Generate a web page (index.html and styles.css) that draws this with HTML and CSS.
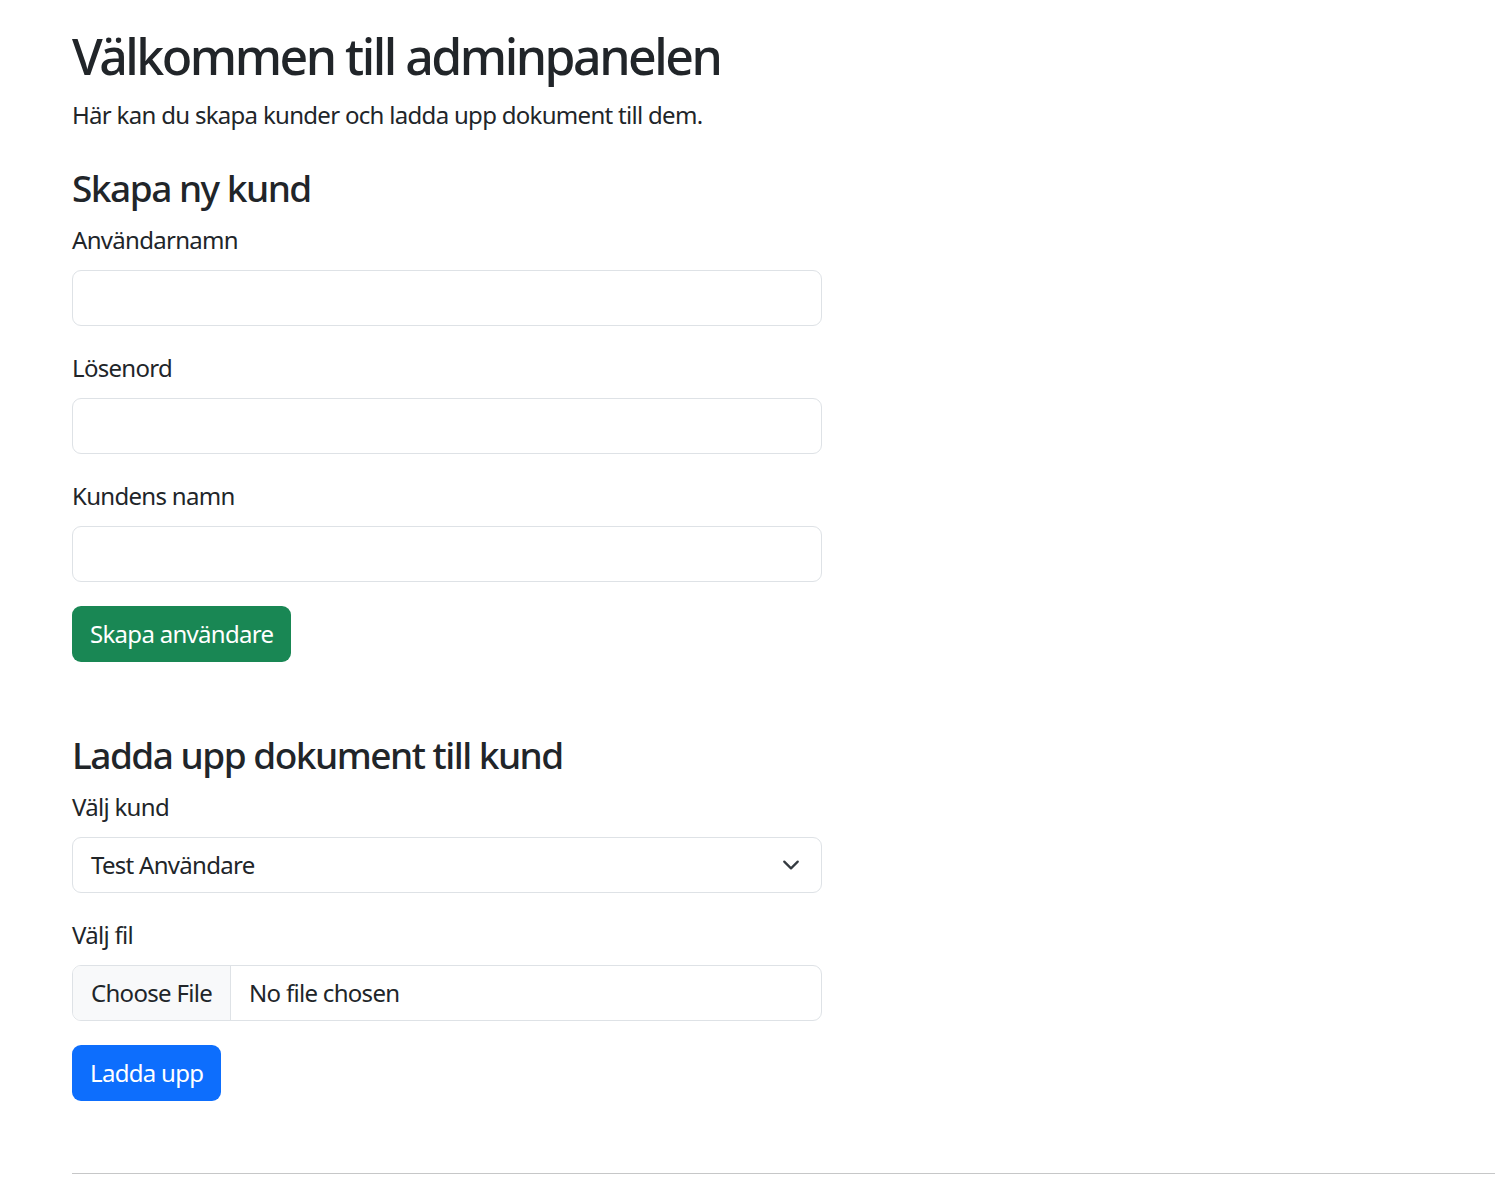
FILE: index.html
```html
<!DOCTYPE html>
<html lang="sv">
<head>
<meta charset="utf-8">
<title>Adminpanel</title>
<link rel="stylesheet" href="styles.css">
</head>
<body>
<main class="page">
  <h1 class="title">Välkommen till adminpanelen</h1>
  <p class="lead">Här kan du skapa kunder och ladda upp dokument till dem.</p>

  <section class="section">
    <h3 class="section-title">Skapa ny kund</h3>
    <form class="form">
      <div class="field">
        <label class="label" for="u">Användarnamn</label>
        <input class="control" id="u" type="text">
      </div>
      <div class="field">
        <label class="label" for="p">Lösenord</label>
        <input class="control" id="p" type="password">
      </div>
      <div class="field">
        <label class="label" for="n">Kundens namn</label>
        <input class="control" id="n" type="text">
      </div>
      <button type="button" class="btn btn-green">Skapa användare</button>
    </form>
  </section>

  <section class="section second">
    <h3 class="section-title">Ladda upp dokument till kund</h3>
    <form class="form">
      <div class="field">
        <label class="label">Välj kund</label>
        <div class="control select">
          <span>Test Användare</span>
          <svg class="chev" width="24" height="18" viewBox="0 0 16 16"><path d="M2 5l6 6 6-6" fill="none" stroke="#343a40" stroke-width="2" stroke-linecap="round" stroke-linejoin="round"/></svg>
        </div>
      </div>
      <div class="field">
        <label class="label">Välj fil</label>
        <div class="control file">
          <span class="file-btn">Choose File</span>
          <span class="file-name">No file chosen</span>
        </div>
      </div>
      <button type="button" class="btn btn-blue">Ladda upp</button>
    </form>
  </section>

  <hr class="rule">
</main>
</body>
</html>
```

FILE: styles.css
```css
html, body {
  margin: 0;
  padding: 0;
  background: #fff;
}
body {
  font-family: "Noto Sans", "Open Sans", sans-serif;
  font-size: 24px;
  line-height: 36px;
  letter-spacing: -0.7px;
  color: #212529;
}
.page {
  padding: 23px 0 0 72px;
}
.title {
  margin: 0 0 8px;
  font-size: 50px;
  line-height: 66px;
  font-weight: 500;
  letter-spacing: -2.5px;
}
.lead {
  margin: 0 0 31px;
}
.section-title {
  margin: 0 0 10px;
  font-size: 37px;
  line-height: 48px;
  font-weight: 500;
  letter-spacing: -1.5px;
}
.second {
  margin-top: 69px;
}
.form {
  width: 750px;
  margin: 0;
}
.field {
  display: flex;
  flex-direction: column;
  margin-bottom: 24px;
}
.label {
  display: block;
  margin-bottom: 12px;
}
.control {
  box-sizing: border-box;
  height: 56px;
  width: 750px;
  border: 1.5px solid #dee2e6;
  border-radius: 9px;
  background: #fff;
  font: inherit;
  letter-spacing: inherit;
  padding: 9px 18px;
  color: #212529;
}
.select {
  display: flex;
  align-items: center;
  justify-content: space-between;
}
.file {
  display: flex;
  align-items: stretch;
  padding: 0;
  overflow: hidden;
}
.file-btn {
  display: flex;
  align-items: center;
  padding: 0 18px;
  background: #f8f9fa;
  border-right: 1.5px solid #dee2e6;
}
.file-name {
  display: flex;
  align-items: center;
  padding: 0 18px;
}
.btn {
  display: inline-block;
  box-sizing: border-box;
  height: 56px;
  padding: 9px 18px;
  border: 0;
  border-radius: 9px;
  font: inherit;
  letter-spacing: inherit;
  color: #fff;
  cursor: pointer;
}
.btn-green { background: #198754; }
.btn-blue { background: #0d6efd; }
.rule {
  margin: 72px 0 0;
  border: 0;
  border-top: 1.5px solid #c6c7c8;
  height: 0;
}
```
